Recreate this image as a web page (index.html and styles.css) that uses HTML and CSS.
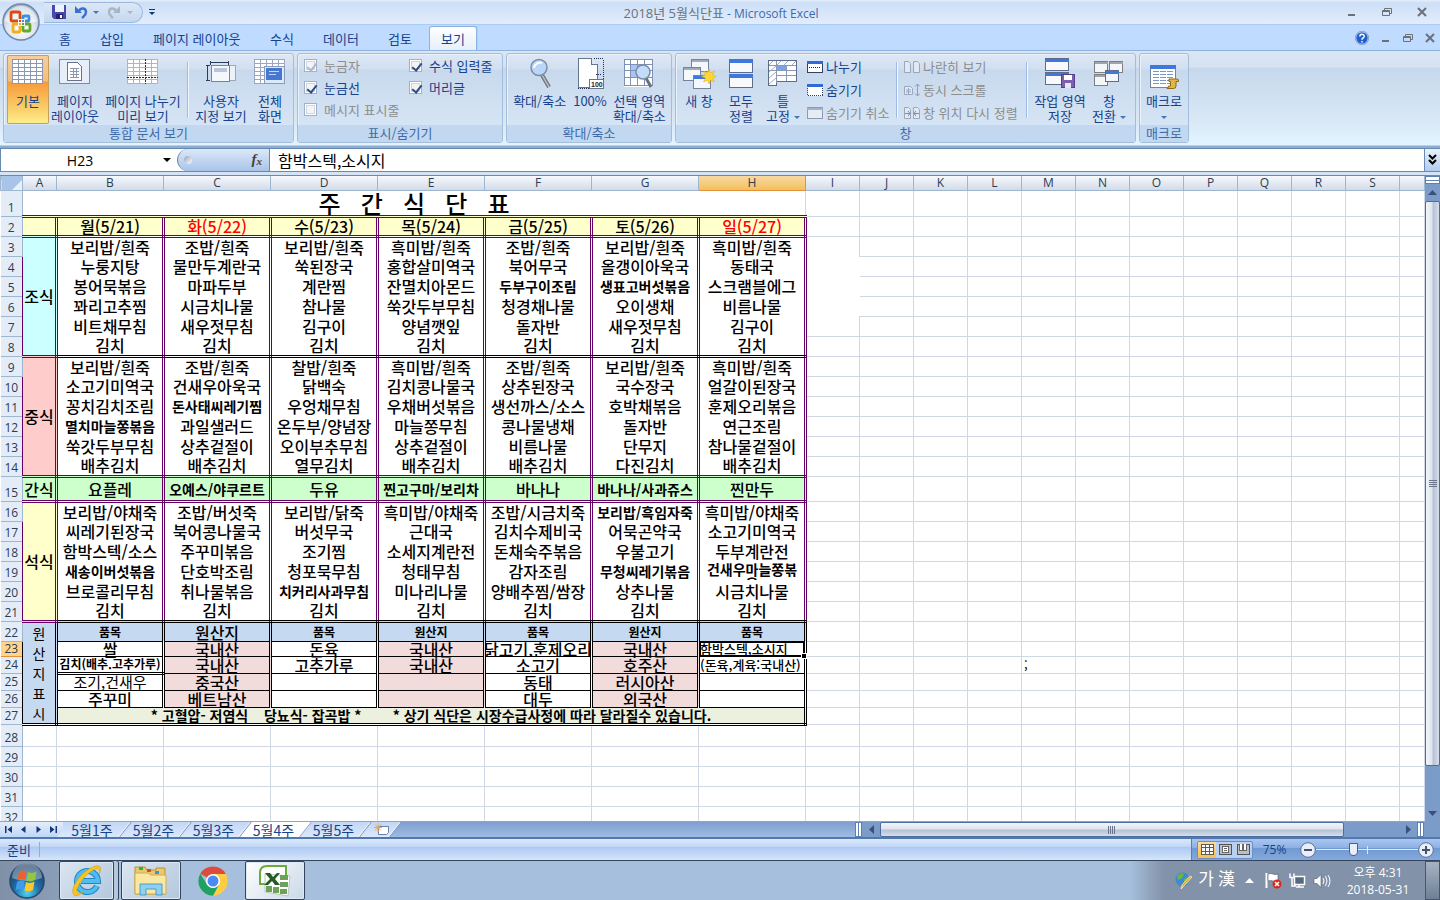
FILE: index.html
```html
<!DOCTYPE html>
<html lang="ko">
<head>
    <meta charset="UTF-8">
    <meta name="viewport" content="width=device-width, initial-scale=1.0">
    <title>2018년 5월식단표 - Microsoft Excel</title>
    <link rel="stylesheet" href="styles.css">
</head>
<body>
    <button class="office-button" aria-label="Office 단추">
        <svg width="38" height="38" viewBox="0 0 38 38">
            <defs>
                <radialGradient id="orb" cx="50%" cy="70%" r="65%">
                    <stop offset="0" stop-color="#fff"/><stop offset=".6" stop-color="#dfe5ee"/><stop offset="1" stop-color="#a9b8ce"/>
                </radialGradient>
            </defs>
            <circle cx="19" cy="19" r="18" fill="url(#orb)" stroke="#6f86a6" stroke-width="1.5"/>
            <path d="M3 19a16 16 0 0 1 32 0z" fill="#fff" opacity=".55"/>
            <g fill="none" stroke-width="2.8">
                <rect x="9" y="9" width="9" height="9" rx="1.500" stroke="#dc4a12"/>
                <rect x="21" y="13" width="6" height="5" rx="1" stroke="#3d8fe0"/>
                <rect x="11" y="21" width="7" height="8" rx="1" stroke="#f2ae1c"/>
                <rect x="21" y="21" width="7" height="7" rx="1" stroke="#66a62c"/>
            </g>
            <path d="M16 16h7v7h-7z" fill="#f4f6fa"/>
            <path d="M17 17h2v2h-2z" fill="#dc4a12"/><path d="M20 17h2v2h-2z" fill="#3d8fe0"/>
            <path d="M17 20h2v2h-2z" fill="#f2ae1c"/><path d="M20 20h2v2h-2z" fill="#66a62c"/>
        </svg>
    </button>

    <header class="title-bar">
        <div class="quick-access">
            <button aria-label="저장">
                <svg width="14" height="14" viewBox="0 0 14 14"><path d="M0 0h14v14H2l-2-2z" fill="#4a48b0"/><path d="M3 0h9v7H3z" fill="#eef3fb"/><path d="M4 9h7v5H4z" fill="#23236b"/><path d="M8 10h2v3H8z" fill="#fff"/></svg>
            </button>
            <button class="undo" aria-label="실행 취소">
                <svg width="13" height="14" viewBox="0 0 13 14"><path d="M4 6c2-4 7-3 7 1 0 3-2 4-4 6" fill="none" stroke="#3c70ca" stroke-width="2.500"/><path d="M0 1v7h7z" fill="#3c70ca"/></svg>
            </button>
            <span class="arrow"></span>
            <button class="redo" aria-label="다시 실행" disabled>
                <svg width="13" height="14" viewBox="0 0 13 14"><path d="M9 6C7 2 2 3 2 7c0 3 2 4 4 6" fill="none" stroke="#a9b6c9" stroke-width="2.500"/><path d="M13 1v7H6z" fill="#a9b6c9"/></svg>
            </button>
            <span class="arrow arrow-off"></span>
        </div>
        <button class="customize" aria-label="빠른 실행 도구 모음 사용자 지정"><span class="bar"></span><span class="arrow"></span></button>
        <h1><span>2018년 5월식단표</span> - Microsoft Excel</h1>
        <div class="window-buttons">
            <button aria-label="최소화"><svg width="10" height="10"><path d="M1 7h7v2H1z" fill="#6b7079"/></svg></button>
            <button aria-label="이전 크기로"><svg width="10" height="10"><path d="M2.500 3V1.500h7v5H8M.5 3.500h7v5h-7zM.5 4.500h7" fill="none" stroke="#6b7079"/></svg></button>
            <button aria-label="닫기"><svg width="10" height="10"><path d="M1 1l8 8M9 1L1 9" stroke="#6b7079" stroke-width="2"/></svg></button>
        </div>
    </header>

    <nav class="menu">
        <button class="menu-home">홈</button>
        <button class="menu-insert">삽입</button>
        <button class="menu-layout">페이지 레이아웃</button>
        <button class="menu-formula">수식</button>
        <button class="menu-data">데이터</button>
        <button class="menu-review">검토</button>
        <button class="menu-view active">보기</button>
        <div class="doc-buttons">
            <button aria-label="도움말"><svg width="14" height="14" viewBox="0 0 14 14"><circle cx="7" cy="7" r="6.300" fill="#1f5fd0" stroke="#fff"/><circle cx="7" cy="7" r="6.700" fill="none" stroke="#4f6d9c" stroke-width=".6"/><path d="M4.800 5.500c0-3 4.600-3 4.400 0C9 7 7 7 7 8.700M7 10v1.500" fill="none" stroke="#fff" stroke-width="1.500"/></svg></button>
            <button aria-label="창 최소화"><svg width="10" height="10"><path d="M1 7h7v2H1z" fill="#6b7079"/></svg></button>
            <button aria-label="창 이전 크기로"><svg width="10" height="10"><path d="M2.500 3V1.500h7v5H8M.5 3.500h7v5h-7zM.5 4.500h7" fill="none" stroke="#6b7079"/></svg></button>
            <button aria-label="창 닫기"><svg width="10" height="10"><path d="M1 1l8 8M9 1L1 9" stroke="#6b7079" stroke-width="2"/></svg></button>
        </div>
    </nav>

    <section class="ribbon">
        <div class="group group-views">
            <div class="tools">
                <button class="big w42 pressed">
                    <svg width="32" height="26"><g shape-rendering="crispEdges"><path d="M0 0h31v25H0z" fill="#fff"/><path d="M.5.5h30v24H.5zM0 4.500h31M0 8.500h31M0 12.500h31M0 16.500h31M0 20.500h31M6.500 0v25M12.500 0v25M18.500 0v25M24.500 0v25" fill="none" stroke="#8a98b4"/></g></svg>
                    기본</button>
                <button class="big w52">
                    <svg width="32" height="26"><g shape-rendering="crispEdges"><path d="M.5.500h30v24H.5z" fill="#e8eef7" stroke="#7c8ba6"/><path d="M8.500 3.500h10l4 4v14h-14z" fill="#fff" stroke="#66758f"/><path d="M11 9.500h9M11 12.500h9M11 15.500h9M11 18.500h9M14.500 9v10M17.500 9v10" stroke="#8a98b4"/></g></svg>
                    페이지<br>레이아웃</button>
                <button class="big w84">
                    <svg width="32" height="26"><g shape-rendering="crispEdges"><path d="M0 0h31v25H0z" fill="#fff"/><path d="M.5.500h30v24H.5zM0 4.500h31M0 8.500h31M0 12.500h31M0 16.500h31M0 20.500h31M6.500 0v25M12.500 0v25M24.500 0v25" fill="none" stroke="#a9b5ca"/><path d="M18.500 0v25M0 18.500h31" stroke="#1f2f55" stroke-dasharray="2 1"/></g></svg>
                    페이지 나누기<br>미리 보기</button>
                <span class="divider"></span>
                <button class="big w60">
                    <svg width="32" height="26"><g shape-rendering="crispEdges"><path d="M20 6.500h10v15H20z" fill="#edf1f8" stroke="#9aa7bd"/><path d="M6.500 6.500h18v16h-18z" fill="#f4f7fc" stroke="#75839c"/><path d="M9 9h13v4H9z" fill="#b8c6dd"/><path d="M2.500 7v15M1 6.500h4M1 21.500h4M6 3.500h17M5.500 2v4M23.500 2v4" stroke="#2d3c5a" fill="none"/></g></svg>
                    사용자<br>지정 보기</button>
                <button class="big w38">
                    <svg width="32" height="26"><g shape-rendering="crispEdges"><path d="M0 0h31v25H0z" fill="#fff"/><path d="M.5.500h30v24H.5zM0 4.500h31M0 8.500h31M0 12.500h31M0 16.500h31M0 20.500h31M6.500 0v25M12.500 0v25M18.500 0v25M24.500 0v25" fill="none" stroke="#9aa7c0"/><path d="M10.500 7.500h20v17h-20z" fill="#dce9fb" stroke="#8b9bb8"/><path d="M12 9h16v12H12z" fill="#4677d2"/><path d="M15 12.500h10M15 15.500h7" stroke="#c5d8f7"/></g></svg>
                    전체<br>화면</button>
            </div>
            <div class="group-name">통합 문서 보기</div>
        </div>

        <div class="group group-show">
            <div class="tools checks">
                <label class="off"><input type="checkbox" checked disabled>눈금자</label>
                <label><input type="checkbox" checked>수식 입력줄</label>
                <label><input type="checkbox" checked>눈금선</label>
                <label><input type="checkbox" checked>머리글</label>
                <label class="off"><input type="checkbox" disabled>메시지 표시줄</label>
            </div>
            <div class="group-name">표시/숨기기</div>
        </div>

        <div class="group group-zoom">
            <div class="tools">
                <button class="big w60">
                    <svg width="32" height="32" viewBox="0 0 32 32"><path d="M18 17l7 12" stroke="#6c6f76" stroke-width="4"/><path d="M18 17l7 12" stroke="#b9bcc2" stroke-width="1.500"/><circle cx="15" cy="9.500" r="8" fill="#b9d6f7" stroke="#7c8ca6" stroke-width="1.500"/><path d="M10 10a6 6 0 0 1 8-5" stroke="#fff" stroke-width="2" fill="none"/></svg>
                    확대/축소</button>
                <button class="big w42">
                    <svg width="32" height="32" viewBox="0 0 32 32"><g shape-rendering="crispEdges"><path d="M4.500.500h13l6 6v23h-19z" fill="#fff" stroke="#66758f"/><path d="M17.500.500v6h6" fill="#dfe7f3" stroke="#66758f"/><path d="M20 .500h9v20M4 30.500h12M22 16.500h6" fill="none" stroke="#1f2f55" stroke-dasharray="1 1"/><path d="M15.500 21.500h14v9h-14z" fill="#fff" stroke="#66758f"/></g><text x="17" y="29" class="icon-number">100</text></svg>
                    100%</button>
                <button class="big w58">
                    <svg width="32" height="32" viewBox="0 0 32 32"><g shape-rendering="crispEdges"><path d="M1 1h28v28H1z" fill="#fff"/><path d="M8 6h14v14H8z" fill="#a8c5f5"/><path d="M1.500 1.500h28v26h-28zM1 6.500h28M1 12.500h28M1 19.500h28M7.500 1v27M14.500 1v27M21.500 1v27" fill="none" stroke="#7f90b5"/></g><path d="M23 20l5 9" stroke="#6c6f76" stroke-width="3"/><circle cx="20" cy="14" r="7" fill="#c3dcf8" stroke="#7c8ca6" stroke-width="1.500"/></svg>
                    선택 영역<br>확대/축소</button>
            </div>
            <div class="group-name">확대/축소</div>
        </div>

        <div class="group group-window">
            <div class="tools">
                <button class="big w42">
                    <svg width="34" height="32" viewBox="0 0 34 32"><g shape-rendering="crispEdges" fill="#f4f7fc" stroke="#75839c"><path d="M9.500 1.500h17v12h-17z"/><path d="M10 3h16" stroke="#a3aab8" stroke-width="2"/><path d="M1.500 9.500h17v13h-17z"/><path d="M2 11h16" stroke="#a3aab8" stroke-width="2"/><path d="M11.500 17.500h17v13h-17z"/><path d="M12 19h16" stroke="#3f78dd" stroke-width="3"/></g><path d="M27 11l1.500 4 4-2-2 4 4 1.500-4 1.500 2 4-4-2-1.500 4-1.500-4-4 2 2-4-4-1.500 4-1.500-2-4 4 2z" fill="#ffd830" stroke="#e2a900" stroke-width=".5"/></svg>
                    새 창</button>
                <button class="big w42">
                    <svg width="26" height="32"><g shape-rendering="crispEdges" fill="#f7f9fd" stroke="#5d6c88"><path d="M1.500 1.500h23v13h-23z"/><path d="M1.500 16.500h23v13h-23z"/><path d="M1 3h24M1 18h24" stroke="#3f78dd" stroke-width="4"/></g></svg>
                    모두<br>정렬</button>
                <button class="big w42">
                    <svg width="32" height="32"><g shape-rendering="crispEdges"><path d="M1.500 2.500h28v21h-20v4h-8z" fill="#fff" stroke="#5d6c88"/><path d="M2 7.500h27M2 12.500h27M9 17.500h20M9.500 3v22M19.500 7v16" stroke="#8a98b4"/><path d="M10 8h9v4h-9z" fill="#78a5ec"/></g><path d="M2 7l4-4M10 7l4-4M17 7l4-4M25 7l4-4M2 14l7-6M2 20l7-6M2 26l7-6" stroke="#9aadd0"/></svg>
                    틀<br>고정<span class="arrow"></span></button>
                <div class="small-tools split-tools">
                    <button><svg width="16" height="14"><g shape-rendering="crispEdges"><path d="M.5 1.500h15v11H.5z" fill="#fff" stroke="#33425f"/><path d="M0 2.500h16" stroke="#2f6ad8" stroke-width="3"/><path d="M2 7.500h12" stroke="#1c2c4c" stroke-dasharray="1 1"/></g></svg>나누기</button>
                    <button><svg width="16" height="14"><g shape-rendering="crispEdges"><path d="M.5 1.500h15v11H.5z" fill="#fff" stroke="#33425f" stroke-dasharray="1 1"/><path d="M0 2.500h16" stroke="#2f6ad8" stroke-width="3"/></g></svg>숨기기</button>
                    <button disabled><svg width="16" height="14"><g shape-rendering="crispEdges"><path d="M.5 1.500h15v11H.5z" fill="#e6ecf5" stroke="#8d9ab0"/><path d="M0 2.500h16" stroke="#a5b2c8" stroke-width="2"/></g></svg>숨기기 취소</button>
                </div>
                <span class="divider"></span>
                <div class="small-tools side-tools">
                    <button disabled><svg width="16" height="14"><path d="M.5 1.500h4l2 2v9h-6zM9.500 1.500h4l2 2v9h-6z" fill="#e3e9f3" stroke="#9aa8bf"/></svg>나란히 보기</button>
                    <button disabled><svg width="16" height="14"><path d="M.5 3.500h6l2 2v6h-8zM2 7h5M2 9h5M4.500 5v6" fill="#e3e9f3" stroke="#9aa8bf"/><path d="M13.500 1v12M11 3.500L13.500 1 16 3.500M11 10.500l2.500 2.500 2.500-2.500" fill="none" stroke="#8f9cb2"/></svg>동시 스크롤</button>
                    <button disabled><svg width="16" height="14"><path d="M.5 1.500h4l2 2v9h-6zM9.500 1.500h4l2 2v9h-6z" fill="#e3e9f3" stroke="#9aa8bf"/><path d="M1 7.500h5M4 5l2 2.500L4 10M15 7.500h-5M12 5l-2 2.500 2 2.500" fill="none" stroke="#7c8aa2"/></svg>창 위치 다시 정렬</button>
                </div>
                <span class="divider"></span>
                <button class="big w58">
                    <svg width="32" height="32"><g shape-rendering="crispEdges" fill="#f7f9fd" stroke="#5d6c88"><path d="M1.500.500h23v12h-23z"/><path d="M1.500 14.500h23v12h-23z"/><path d="M1 2h24M1 16h24" stroke="#3f78dd" stroke-width="3"/><path d="M17.500 16.500h13v13h-13z" fill="#7d5fb0" stroke="#54408a"/><path d="M20 17h8v5h-8z" fill="#fff" stroke="none"/><path d="M21 25h6v5h-6z" fill="#e8e4f2" stroke="none"/></g></svg>
                    작업 영역<br>저장</button>
                <button class="big w40">
                    <svg width="32" height="32"><g shape-rendering="crispEdges" fill="#f4f6fa" stroke="#7d7f85"><path d="M1.500 3.500h13v11h-13z"/><path d="M16.500 3.500h13v11h-13z"/><path d="M1.500 16.500h13v11h-13z"/><path d="M2 5h13M17 5h13M2 18h13" stroke="#a2a4aa" stroke-width="2"/><path d="M12.500 12.500h13v11h-13z" stroke="#5d6c88"/><path d="M13 14h13" stroke="#3f78dd" stroke-width="3"/></g></svg>
                    창<br>전환<span class="arrow"></span></button>
            </div>
            <div class="group-name">창</div>
        </div>

        <div class="group group-macro">
            <div class="tools">
                <button class="big w42">
                    <svg width="32" height="32"><g shape-rendering="crispEdges"><path d="M2.500 7.500h25v22h-25z" fill="#fff" stroke="#75839c"/><path d="M2 9h26" stroke="#3f78dd" stroke-width="4"/><path d="M5 13.500h20M5 16.500h20M5 19.500h20M5 22.500h20M5 25.500h20" stroke="#7b96cc" stroke-dasharray="6 1"/></g><path d="M21 21h8q2 0 1.500 2.500H28V28q0 2.500-2.500 2.500H19q1.500-1 1.500-2.500h2v-4.500H21z" fill="#e3b545" stroke="#8f6a14"/></svg>
                    매크로<br><span class="arrow"></span></button>
            </div>
            <div class="group-name">매크로</div>
        </div>
    </section>

    <section class="formula-bar">
        <div class="name-box">
            <input value="H23" aria-label="이름 상자">
            <span class="arrow arrow-black"></span>
        </div>
        <div class="fx"><span class="knob"></span><button aria-label="함수 삽입"><i>f</i><sub>x</sub></button></div>
        <input class="formula" value="함박스텍,소시지" aria-label="수식 입력줄">
        <button class="expand" aria-label="수식 입력줄 확장"><svg width="9" height="12"><path d="M1 1l3.500 3.500L8 1M1 6l3.500 3.500L8 6" fill="none" stroke="#000" stroke-width="2"/></svg></button>
    </section>

    <main class="workspace">
        <div class="grid">
            <table class="sheet" id="sheet"></table>
        </div>
        <div class="v-scroll">
            <span class="split"></span>
            <button aria-label="위로"><svg width="9" height="5"><path d="M0 5l4.500-5L9 5z" fill="#3c4f78"/></svg></button>
            <span class="thumb"><svg width="8" height="8"><path d="M0 .5h8M0 2.500h8M0 4.500h8M0 6.500h8" stroke="#6a7488"/></svg></span>
            <button aria-label="아래로"><svg width="9" height="5"><path d="M0 0l4.500 5L9 0z" fill="#3c4f78"/></svg></button>
        </div>
    </main>

    <div class="sheet-bar">
        <div class="sheet-nav">
            <button aria-label="첫 시트"><svg width="7" height="7"><path d="M0 0h1.500v7H0zM7 0v7L2.500 3.500z" fill="#15357a"/></svg></button>
            <button aria-label="이전 시트"><svg width="7" height="7"><path d="M5.500 0v7L1 3.500z" fill="#15357a"/></svg></button>
            <button aria-label="다음 시트"><svg width="7" height="7"><path d="M1.500 0v7L6 3.500z" fill="#15357a"/></svg></button>
            <button aria-label="마지막 시트"><svg width="7" height="7"><path d="M5.500 0H7v7H5.500zM0 0v7l4.500-3.500z" fill="#15357a"/></svg></button>
        </div>
        <div class="sheet-tabs">
            <button>5월1주</button>
            <button>5월2주</button>
            <button>5월3주</button>
            <button class="current">5월4주</button>
            <button>5월5주</button>
            <button class="new-sheet" aria-label="워크시트 삽입"><svg width="15" height="13"><path d="M4.500 3.500h10v6l-2 2h-8z" fill="#fff" stroke="#6780ac"/><path d="M4 0v9M0 4.500h8M1 1.500l6 6M7 1.500l-6 6" stroke="#f0a63a"/></svg></button>
        </div>
        <div class="h-scroll">
            <span class="grip"></span>
            <button aria-label="왼쪽으로"><svg width="5" height="9"><path d="M5 0v9L0 4.500z" fill="#3c4f78"/></svg></button>
            <span class="thumb"><svg width="8" height="8"><path d="M.5 0v8M2.500 0v8M4.500 0v8M6.500 0v8" stroke="#6a7488"/></svg></span>
            <button class="right" aria-label="오른쪽으로"><svg width="5" height="9"><path d="M0 0v9l5-4.500z" fill="#3c4f78"/></svg></button>
            <span class="grip"></span>
        </div>
    </div>

    <footer class="status-bar">
        <span class="ready">준비</span>
        <div class="view-tools">
            <div class="view-buttons">
                <button class="on" aria-label="기본"><svg width="13" height="11" shape-rendering="crispEdges"><path d="M.5.500h12v10H.5zM0 3.500h13M0 7.500h13M4.500 0v11M8.500 0v11" fill="#fff" stroke="#5f5a4a"/></svg></button>
                <button aria-label="페이지 레이아웃"><svg width="13" height="11" shape-rendering="crispEdges"><path d="M.5.500h12v10H.5z" fill="#b9bec8" stroke="#555"/><path d="M3.500 2.500h6v6h-6zM5 4.500h3M5 6.500h3" fill="#fff" stroke="#666"/></svg></button>
                <button aria-label="페이지 나누기 미리 보기"><svg width="13" height="11" shape-rendering="crispEdges"><path d="M.5.500h12v10H.5z" fill="#b9bec8" stroke="#555"/><path d="M2.500 0v6.500h3V0M6.500 0v6.500h3V0" fill="#fff" stroke="#666"/></svg></button>
            </div>
            <button class="percent">75%</button>
            <button class="round" aria-label="축소"><svg width="16" height="16"><circle cx="8" cy="8" r="7.300" fill="#e9eff8" stroke="#5c7196"/><path d="M4 8h8" stroke="#44536e" stroke-width="2"/></svg></button>
            <input type="range" min="0" max="100" value="36" aria-label="확대/축소">
            <button class="round" aria-label="확대"><svg width="16" height="16"><circle cx="8" cy="8" r="7.300" fill="#e9eff8" stroke="#5c7196"/><path d="M4 8h8M8 4v8" stroke="#44536e" stroke-width="2"/></svg></button>
        </div>
    </footer>

    <div class="taskbar">
        <button class="start" aria-label="시작">
            <svg width="36" height="36" viewBox="0 0 36 36">
                <defs><radialGradient id="start" cx="50%" cy="85%" r="75%"><stop offset="0" stop-color="#4fd3f5"/><stop offset=".5" stop-color="#1f6ea8"/><stop offset="1" stop-color="#1b3f66"/></radialGradient></defs>
                <circle cx="18" cy="18" r="17" fill="url(#start)" stroke="#29486b" stroke-width="1.500"/>
                <path d="M3 15a15 15 0 0 1 30 0q-15 6-30 0z" fill="#fff" opacity=".35"/>
                <path d="M10 9q4-2.500 7.500-.5L16 17q-3.500-2-7.500.5z" fill="#f0602a"/>
                <path d="M19 9q4 2 8.500-.5L26 17q-4 2.500-8.500.5z" fill="#93c83e"/>
                <path d="M8 19q4-2.500 7.500-.5L14 27q-3.500-2-7.500.5z" fill="#3f9bec"/>
                <path d="M17 19q4 2 8.500-.5L24 27q-4 2.500-8.500.5z" fill="#fcc72c"/>
            </svg>
        </button>
        <button class="task stacked" aria-label="Internet Explorer">
            <svg width="32" height="32" viewBox="0 0 32 32">
                <path d="M26 21a10.500 10.500 0 1 1 1-5H10" fill="none" stroke="#1d86cc" stroke-width="6"/>
                <path d="M26 21a10.500 10.500 0 1 1 1-5H10" fill="none" stroke="#50bdf0" stroke-width="4"/>
                <path d="M3 30C-3 24 13 3 25 1c5-1 6 3 3 8 1-4 0-6-3-5C17 6 4 22 6 27c1 2 4 1 7-1-4 4-8 6-10 4z" fill="#f7c51e" stroke="#cf9408" stroke-width=".5"/>
            </svg>
        </button>
        <button class="task" aria-label="탐색기">
            <svg width="34" height="32" viewBox="0 0 34 32">
                <path d="M1 2h10l2 3h9V3h9v26H1z" fill="#e9ca6a" stroke="#b99433"/>
                <path d="M5 2h4v3H5z" fill="#2db34a"/><path d="M13 4h4v3h-4z" fill="#d54a32"/><path d="M21 6h4v3h-4z" fill="#3b93dc"/>
                <path d="M1 8h13l3 2h15v19H1z" fill="#f9e7a4" stroke="#cfae55"/>
                <path d="M6 30V19h22v11h-6v-6H12v6z" fill="#8fd0ee" stroke="#4b9dc8"/>
            </svg>
        </button>
        <button class="task plain" aria-label="Chrome">
            <svg width="30" height="30" viewBox="0 0 30 30">
                <path d="M15 15L2.300 7.700A14.700 14.700 0 0 1 27.700 7.700z" fill="#dd4b3e"/>
                <path d="M15 8H27.900a14.700 14.700 0 0 1-13 21.700l6-11z" fill="#fecd41"/>
                <path d="M2.300 7.700L9 18.500q6 7 12 0l-6 11.200A14.700 14.700 0 0 1 2.300 7.700z" fill="#1fa261"/>
                <circle cx="15" cy="15" r="7" fill="#fff"/><circle cx="15" cy="15" r="5.500" fill="#4a8af4"/>
            </svg>
        </button>
        <button class="task front" aria-label="Excel">
            <svg width="32" height="32" viewBox="0 0 32 32">
                <path d="M8 1h19v18H1V8q0-7 7-7z" fill="#fff" stroke="#69ad3c" stroke-width="2"/>
                <path d="M6 9l25 2-2 20-23-4z" fill="#fff" stroke="#b9c9b4"/>
                <path d="M21 10h8v5h-8zM21 17h8v5h-8zM21 24h7v5h-7zM14 22h6v6h-6zM7 21h6v6H7z" fill="#6da25a"/>
                <path d="M6 8h5l3 4 4-4h3l-5 6 5 6h-5l-3-4-4 4H5l6-6z" fill="#235a26"/>
            </svg>
        </button>
        <div class="tray">
            <svg width="18" height="18" viewBox="0 0 18 18"><circle cx="7.500" cy="7.500" r="7" fill="#3d8bcf"/><path d="M2 4q4-4 7-2l-2 4-4 2zM9 7l5-2q1 4-2 7l-3-1z" fill="#6cb648"/><path d="M17 5l-8 9-3 3 1-4 8-9z" fill="#f4a52a" stroke="#fff" stroke-width=".6"/></svg>
            <span class="ime">가</span>
            <span class="ime">漢</span>
            <svg class="up" width="9" height="5"><path d="M0 5l4.500-5L9 5z" fill="#fff"/></svg>
            <svg width="17" height="17"><path d="M1.500 1v15" stroke="#fff" stroke-width="2"/><path d="M3 2q3-1 5 0t5 0v7q-3 1-5 0t-5 0z" fill="#fff" stroke="#4b5a70" stroke-width=".6"/><circle cx="12" cy="12" r="4.500" fill="#d8281c"/><path d="M10 10l4 4M14 10l-4 4" stroke="#fff" stroke-width="1.500"/></svg>
            <svg width="17" height="17"><path d="M5.500 4.500h10v8h-10z" fill="#56687f" stroke="#fff" stroke-width="1.500"/><path d="M7 15h8M10 12v3M1 1.500v4h4v-4M3 5v9h4" fill="none" stroke="#fff" stroke-width="1.500"/></svg>
            <svg width="18" height="16"><path d="M1 5.500h3l4-4v13l-4-4H1z" fill="#fff" stroke="#4b5a70" stroke-width=".6"/><path d="M10 5q2 3 0 6M12.500 3q3 5 0 10M15 2q4 6 0 12" fill="none" stroke="#fff"/></svg>
        </div>
        <div class="clock"><span>오후 4:31</span><span>2018-05-31</span></div>
        <button class="show-desktop" aria-label="바탕 화면 보기"></button>
    </div>

    <script>
        const columns = 'ABCDEFGHIJKLMNOPQRS'.split('').concat('');
        const widths = [22, 34, 107, 107, 107, 107, 107, 107, 107, 54, 54, 54, 54, 54, 54, 54, 54, 54, 54, 54];
        const heights = { 1: 26, 15: 25, 23: 15, 24: 17, 25: 17, 26: 17, 27: 17, 28: 22 };

        // a leading ~ marks text that is shrunk to fit its cell
        const menu = {
            2: ['월(5/21)', '화(5/22)', '수(5/23)', '목(5/24)', '금(5/25)', '토(5/26)', '일(5/27)'],
            3: ['보리밥/흰죽', '조밥/흰죽', '보리밥/흰죽', '흑미밥/흰죽', '조밥/흰죽', '보리밥/흰죽', '흑미밥/흰죽'],
            4: ['누룽지탕', '물만두계란국', '쑥된장국', '홍합살미역국', '북어무국', '올갱이아욱국', '동태국'],
            5: ['봉어묵볶음', '마파두부', '계란찜', '잔멸치아몬드', '~두부구이조림', '~생표고버섯볶음', '스크램블에그'],
            6: ['꽈리고추찜', '시금치나물', '참나물', '쑥갓두부무침', '청경채나물', '오이생채', '비름나물'],
            7: ['비트채무침', '새우젓무침', '김구이', '양념깻잎', '돌자반', '새우젓무침', '김구이'],
            8: ['김치', '김치', '김치', '김치', '김치', '김치', '김치'],
            9: ['보리밥/흰죽', '조밥/흰죽', '찰밥/흰죽', '흑미밥/흰죽', '조밥/흰죽', '보리밥/흰죽', '흑미밥/흰죽'],
            10: ['소고기미역국', '건새우아욱국', '닭백숙', '김치콩나물국', '상추된장국', '국수장국', '얼갈이된장국'],
            11: ['꽁치김치조림', '~돈사태씨레기찜', '우엉채무침', '우채버섯볶음', '생선까스/소스', '호박채볶음', '훈제오리볶음'],
            12: ['~멸치마늘쫑볶음', '과일샐러드', '온두부/양념장', '마늘쫑무침', '콩나물냉채', '돌자반', '연근조림'],
            13: ['쑥갓두부무침', '상추겉절이', '오이부추무침', '상추겉절이', '비름나물', '단무지', '참나물겉절이'],
            14: ['배추김치', '배추김치', '열무김치', '배추김치', '배추김치', '다진김치', '배추김치'],
            15: ['요플레', '~오예스/야쿠르트', '두유', '~찐고구마/보리차', '바나나', '~바나나/사과쥬스', '찐만두'],
            16: ['보리밥/야채죽', '조밥/버섯죽', '보리밥/닭죽', '흑미밥/야채죽', '조밥/시금치죽', '~보리밥/흑임자죽', '흑미밥/야채죽'],
            17: ['씨레기된장국', '북어콩나물국', '버섯무국', '근대국', '김치수제비국', '어묵곤약국', '소고기미역국'],
            18: ['함박스텍/소스', '주꾸미볶음', '조기찜', '소세지계란전', '돈채숙주볶음', '우불고기', '두부계란전'],
            19: ['~새송이버섯볶음', '단호박조림', '청포묵무침', '청태무침', '감자조림', '~무청씨레기볶음', '~건새우마늘쫑볶음'],
            20: ['브로콜리무침', '취나물볶음', '~치커리사과무침', '미나리나물', '양배추찜/쌈장', '상추나물', '시금치나물'],
            21: ['김치', '김치', '김치', '김치', '김치', '김치', '김치'],
            22: ['품목', '원산지', '품목', '원산지', '품목', '원산지', '품목'],
            23: ['쌀', '국내산', '돈육', '국내산', '닭고기,훈제오리', '국내산', '함박스텍,소시지'],
            24: ['김치(배추.고추가루)', '국내산', '고추가루', '국내산', '소고기', '호주산', '(돈육,계육:국내산)'],
            25: ['조기,건새우', '중국산', '', '', '동태', '러시아산', ''],
            26: ['주꾸미', '베트남산', '', '', '대두', '외국산', '']
        };
        const sides = {
            2: ['', 1, 'head'], 3: ['조식', 6, 'breakfast'], 9: ['중식', 6, 'lunch'],
            15: ['간식', 1, 'snack'], 16: ['석식', 6, 'dinner'], 22: ['원<br>산<br>지<br>표<br>시', 6, 'origin-side']
        };
        const ends = [2, 8, 14, 15, 21];

        let html = '<colgroup>' + widths.map(w => `<col style="width:${w}px">`).join('') + '<col></colgroup>';
        html += '<tr class="letters"><th class="corner"></th>' + columns.map(c => `<th class="${c === 'H' ? 'picked' : ''}">${c}</th>`).join('') + '</tr>';

        for (let r = 1; r <= 32; r++) {
            html += `<tr class="row-${r}" style="height:${heights[r] || 20}px"><th class="number ${r === 23 ? 'picked' : ''}">${r}</th>`;
            if (sides[r]) {
                html += `<td rowspan="${sides[r][1]}" class="side ${sides[r][2]}">${sides[r][0]}</td>`;
            }
            if (r === 1) {
                html += '<td colspan="8" class="title">주   간   식   단   표</td>';
            } else if (menu[r]) {
                html += menu[r].map((text, i) => {
                    let name = r < 22 ? 'dish' : 'origin';
                    if (ends.includes(r)) name += ' end';
                    if (r === 2) name += i === 1 || i === 6 ? ' head red' : ' head';
                    if (r === 15) name += ' snack';
                    if (r === 22) name += ' origin-head';
                    if (r > 22 && i % 2) name += ' pink';
                    if (text[0] === '~') name += ' fit';
                    return `<td class="${name} ${columns[i + 1]}${r}"><span>${text.replace('~', '')}</span></td>`;
                }).join('');
            } else if (r === 27) {
                html += '<td colspan="7" class="notice">* 고혈압- 저염식    당뇨식- 잡곡밥 *        * 상기 식단은 시장수급사정에 따라 달라질수 있습니다.</td>';
            }
            const first = r > 27 ? 0 : 8;
            for (let i = first; i < columns.length; i++) {
                html += `<td class="cell ${columns[i]}${r}">${columns[i] + r === 'M24' ? ';' : ''}</td>`;
            }
            html += '</tr>';
        }
        document.getElementById('sheet').innerHTML = html;
    </script>
</body>
</html>
```
FILE: styles.css
```css
* {
    box-sizing: border-box;
}
body {
    margin: 0;
    height: 100vh;
    display: flex;
    flex-direction: column;
    overflow: hidden;
    background-color: #bfdbff;
    font-family: "Noto Sans CJK KR", sans-serif;
    font-size: 13px;
    line-height: 15px;
    color: #15428b;
}
button {
    background: none;
    border: none;
    padding: 0;
    margin: 0;
    font: inherit;
    color: inherit;
    white-space: nowrap;
}
input {
    font: inherit;
    border: none;
    padding: 0;
    margin: 0;
    outline: none;
}
svg {
    display: block;
    flex: none;
}
.arrow {
    display: inline-block;
    width: 0;
    height: 0;
    border: 3px solid transparent;
    border-top-color: #4a74b4;
    border-bottom: none;
}
.arrow-off {
    border-top-color: #a9b6c9;
}
.arrow-black {
    border-width: 4px;
    border-top-color: #000;
    border-bottom: none;
}

/* title bar */
.office-button {
    position: absolute;
    left: 2px;
    top: 3px;
    z-index: 2;
}
.title-bar {
    height: 25px;
    flex: none;
    display: flex;
    align-items: center;
    padding-left: 44px;
    background: linear-gradient(#e6effb, #cddff7 12%, #e2edfb);
    border-bottom: 1px solid #a9cbf5;
}
.quick-access {
    width: 99px;
    height: 21px;
    display: flex;
    align-items: center;
    padding-left: 8px;
    border: 1px solid #9db8dc;
    border-left: none;
    border-radius: 0 11px 11px 0;
    background: linear-gradient(#dbe7f6, #c6d8ee);
}
.undo {
    margin: 0 5px 0 9px;
}
.redo {
    margin: 0 7px 0 8px;
}
.customize {
    display: flex;
    flex-direction: column;
    align-items: center;
    gap: 2px;
    margin-left: 6px;
}
.customize .bar {
    width: 6px;
    height: 1px;
    background-color: #15357a;
}
.customize .arrow {
    border-top-color: #15357a;
}
h1 {
    flex: 1;
    margin: 0;
    padding-right: 60px;
    padding-top: 2px;
    text-align: center;
    font-size: 12px;
    font-weight: normal;
    font-family: "Open Sans", "Noto Sans CJK KR", sans-serif;
    color: #3e6aaa;
}
h1 span {
    font-size: 13px;
    color: #69737f;
}
.window-buttons {
    display: flex;
    gap: 25px;
    padding-right: 13px;
}

/* ribbon tabs */
.menu {
    height: 26px;
    flex: none;
    display: flex;
    align-items: flex-end;
    padding-left: 59px;
    border-bottom: 1px solid #8db2e3;
}
.menu > button {
    height: 24px;
    text-align: left;
}
.menu-home {
    width: 41px;
}
.menu-insert {
    width: 53px;
}
.menu-layout {
    width: 117px;
}
.menu-formula {
    width: 53px;
}
.menu-data {
    width: 65px;
}
.menu-review {
    width: 41px;
}
.menu > .menu-view {
    width: 48px;
    text-align: center;
    border: 1px solid #8db2e3;
    border-bottom: none;
    border-radius: 3px 3px 0 0;
    background: linear-gradient(#fff, #e6effa);
    box-shadow: 1px 0 1px #8fe4f0;
}
.doc-buttons {
    display: flex;
    gap: 12px;
    align-items: center;
    height: 25px;
    margin-left: auto;
    padding-right: 5px;
}

/* ribbon */
.ribbon {
    height: 97px;
    flex: none;
    display: flex;
    align-items: flex-start;
    gap: 3px;
    padding: 2px 3px 5px;
    background: linear-gradient(#dbe6f4, #d6e2f2 16px, #c7d8ed 17px, #d8e8f5 70px, #e2f5ff 94px, #8fabcf 95px);
}
.group {
    height: 90px;
    flex: none;
    display: flex;
    flex-direction: column;
    border: 1px solid #a3bedb;
    border-radius: 3px;
    box-shadow: inset 1px 1px 0 #e9f1fa;
    background: linear-gradient(#dee8f5, #d1dff0 15px, #c8d9ed 16px, #dae8f7);
}
.group-name {
    height: 17px;
    flex: none;
    line-height: 16px;
    text-align: center;
    color: #3e6aaa;
    background-color: #c1d8f0;
}
.tools {
    flex: 1;
    min-height: 0;
    display: flex;
    padding: 1px 3px;
}
.group-views {
    width: 291px;
}
.group-show {
    width: 206px;
}
.group-zoom {
    width: 166px;
}
.group-window {
    width: 461px;
}
.group-macro {
    width: 50px;
}
.big {
    display: block;
    text-align: center;
    line-height: 15px;
    align-self: flex-start;
}
.big svg {
    height: 32px;
    margin: 4px auto 2px;
}
.group-zoom .big svg,
.group-window .big svg,
.group-macro .big svg {
    margin: 3px auto;
}
.big .arrow {
    margin-left: 4px;
    vertical-align: middle;
}
.group-macro .big .arrow {
    margin: 0;
}
.w38 {
    width: 38px;
}
.w40 {
    width: 40px;
}
.w42 {
    width: 42px;
}
.w52 {
    width: 52px;
}
.w58 {
    width: 58px;
}
.w60 {
    width: 60px;
}
.w84 {
    width: 84px;
}
.pressed {
    padding-bottom: 16px;
    border-radius: 2px;
    box-shadow: inset 0 0 0 1px #c2a060;
    background: linear-gradient(#f5cfa0, #f8bd77 26px, #f79a3a 27px, #fbd46e 56px, #fdf090);
}
.divider {
    width: 2px;
    height: 56px;
    margin: 7px 2px;
    background-color: #9cbce6;
    border-right: 1px solid #f2f7fd;
}
.checks {
    display: grid;
    grid-template-columns: 105px 1fr;
    grid-auto-rows: 22px;
    padding: 0 6px;
}
.checks label {
    display: flex;
    align-items: center;
    gap: 7px;
}
.checks input {
    appearance: none;
    width: 13px;
    height: 13px;
    border: 1px solid #9fb2cc;
    background-color: #f4f4f4;
    box-shadow: inset 0 0 0 1px #fff, inset 0 0 0 2px #cfd6e0;
    position: relative;
}
.checks input:checked::after {
    content: "";
    position: absolute;
    left: 4px;
    top: 1px;
    width: 4px;
    height: 8px;
    border: solid #2b4d86;
    border-width: 0 2px 2px 0;
    transform: rotate(38deg);
}
.checks input:disabled::after {
    border-color: #a9b8cc;
}
.off,
.small-tools button:disabled {
    color: #8d8d8d;
}
.icon-number {
    font-family: "Liberation Sans", sans-serif;
    font-size: 7px;
    font-weight: bold;
    fill: #222;
}
.group-window .tools {
    padding: 1px 2px;
}
.group-window .divider {
    margin: 7px 3px;
}
.small-tools {
    display: flex;
    flex-direction: column;
    padding-left: 3px;
}
.small-tools button {
    height: 23px;
    display: flex;
    align-items: center;
    gap: 3px;
}
.split-tools {
    width: 89px;
}
.side-tools {
    width: 122px;
}

/* formula bar */
.formula-bar {
    height: 28px;
    flex: none;
    display: flex;
    border-top: 1px solid #6789b5;
    border-bottom: 1px solid #6789b5;
    box-shadow: inset 0 -3px 0 #d4e3f5, inset 0 -4px 0 #6789b5;
    padding-bottom: 4px;
    background-color: #fff;
    color: #000;
}
.name-box {
    width: 177px;
    display: flex;
    align-items: center;
    border-left: 1px solid #6789b5;
}
.name-box input {
    width: 158px;
    text-align: center;
    font-family: "Open Sans", sans-serif;
    font-size: 14px;
    background: none;
}
.name-box .arrow {
    margin-left: 4px;
}
.fx {
    width: 93px;
    display: flex;
    justify-content: space-between;
    align-items: center;
    padding: 0 7px 0 6px;
    border: 1px solid #6789b5;
    border-width: 0 1px 0 1px;
    border-radius: 12px 0 0 12px;
    background: linear-gradient(#dce8f8, #a9c4ea);
}
.knob {
    width: 8px;
    height: 8px;
    border-radius: 50%;
    background: linear-gradient(135deg, #94a3ba, #fff);
}
.fx button {
    font-family: "Liberation Serif", serif;
    font-weight: bold;
    font-size: 15px;
    color: #444;
}
.fx sub {
    font-size: 11px;
    font-style: italic;
    vertical-align: -1px;
}
.formula {
    flex: 1;
    min-width: 0;
    padding-left: 8px;
    font-size: 16px;
}
.expand {
    width: 16px;
    display: flex;
    align-items: center;
    justify-content: center;
    border-left: 1px solid #6789b5;
    background: linear-gradient(#eaf1fb, #b3cbec);
}

/* worksheet */
.workspace {
    flex: 1;
    min-height: 0;
    display: flex;
}
.grid {
    flex: 1;
    min-width: 0;
    overflow: hidden;
    background-color: #fff;
    border-bottom: 1px solid #8aa6ce;
}
.sheet {
    width: 100%;
    table-layout: fixed;
    border-collapse: collapse;
    line-height: 12px;
    color: #000;
}
.sheet th,
.sheet td {
    padding: 0;
    text-align: center;
    white-space: nowrap;
}
.sheet th {
    font-family: "Open Sans", sans-serif;
    font-size: 12px;
    font-weight: normal;
    color: #2b3c55;
    border: 1px solid #9eb6ce;
}
.letters {
    height: 14px;
}
.letters th {
    border-top: none;
    background: linear-gradient(#f6f9fc, #d3dbe8);
}
.sheet .corner {
    background: linear-gradient(135deg, #a9c4e9 70%, #e8f0fa 70%);
}
.letters .picked {
    background: linear-gradient(#f9d9a1, #f1bf5f);
    border: 1px solid #e69138;
    border-top: none;
}
.sheet .number {
    background-color: #e4ecf7;
    border-left: none;
    vertical-align: bottom;
    line-height: 14px;
    padding-bottom: 1px;
}
.sheet .number.picked {
    padding-bottom: 0;
    background-color: #ffd58d;
    border-color: #e69138;
}
.sheet .cell {
    border: 1px solid #d0d7e5;
}
.sheet .title {
    font-size: 24px;
    font-weight: 500;
    line-height: 22px;
    white-space: pre;
    border-bottom: 3px double #660066;
}
.sheet .side {
    font-size: 16px;
    font-weight: 500;
    border: 3px double #660066;
    border-left: 1px solid #660066;
}
.sheet .dish {
    font-size: 16px;
    font-weight: 500;
    border-left: 3px double #660066;
    border-right: 3px double #660066;
}
.sheet .end {
    border-bottom: 3px double #660066;
}
.sheet .row-8 .end,
.sheet .row-21 .end {
    border-bottom-color: #000;
}
.sheet .fit {
    font-size: 14px;
    font-weight: bold;
}
.head {
    background-color: #ffffcc;
}
.red {
    color: #f00;
}
.breakfast {
    background-color: #ccffff;
}
.lunch {
    background-color: #ffcccc;
}
.snack {
    background-color: #ccffcc;
}
.dinner {
    background-color: #ffffcc;
}
.sheet .origin-side {
    line-height: 20px;
    font-size: 14px;
    font-weight: normal;
    background-color: #c5d9f1;
    border: 3px double #000;
    border-left: 1px solid #000;
}
.sheet .origin {
    font-size: 16px;
    font-weight: 500;
    border: 1px solid #000;
    border-left: 3px double #000;
    border-right: 3px double #000;
}
.sheet .origin-head {
    border-top: 3px double #000;
    font-size: 12px;
    font-weight: bold;
    background-color: #c5d9f1;
}
.sheet .C22 {
    font-size: 16px;
    font-weight: 500;
}
.pink {
    background-color: #f2dcdb;
}
.sheet .B24 {
    font-size: 12px;
    font-weight: bold;
    border-bottom: 3px double #000;
}
.sheet .B25 {
    font-size: 15px;
    font-weight: normal;
}
.sheet .F23 {
    overflow: hidden;
}
.sheet .F23 span {
    display: flex;
    justify-content: center;
}
.sheet .H23,
.sheet .H24 {
    font-size: 13px;
    text-align: left;
}
.sheet .H23 {
    position: relative;
}
.H23::before {
    content: "";
    position: absolute;
    inset: 0;
    border: 1px solid #000;
}
.H23::after {
    content: "";
    position: absolute;
    right: -3px;
    bottom: -3px;
    width: 4px;
    height: 4px;
    background-color: #000;
    border: 1px solid #fff;
}
.H19 span {
    display: block;
    height: 18px;
    padding: 0 4px;
    line-height: 14px;
    white-space: normal;
    overflow: hidden;
}
.sheet .notice {
    font-size: 14px;
    font-weight: bold;
    white-space: pre;
    background-color: #ebf1de;
    border: 3px double #000;
    border-top: 1px solid #000;
}
.sheet .M24 {
    text-align: left;
    padding-left: 2px;
}
.sheet .I4,
.sheet .I5,
.sheet .I6 {
    border: none;
}
.sheet .I3 {
    border-bottom: none;
}
.sheet .I7 {
    border-top: none;
}
.sheet .J4,
.sheet .J5,
.sheet .J6 {
    border-left: none;
}

/* scroll bars */
.v-scroll {
    width: 15px;
    flex: none;
    display: flex;
    flex-direction: column;
    background-color: #7b9bc9;
}
.v-scroll .split {
    height: 8px;
    border: 1px solid #5d80b3;
    background: linear-gradient(#fff 3px, #5d80b3 3px, #5d80b3 4px, #fff 4px);
}
.v-scroll button {
    height: 17px;
    display: flex;
    align-items: center;
    justify-content: center;
}
.v-scroll .thumb {
    height: 565px;
    flex: 0 1 auto;
    margin-bottom: auto;
    display: flex;
    align-items: center;
    justify-content: center;
    border: 1px solid #4e6d9f;
    border-radius: 2px;
    background: linear-gradient(90deg, #f2f5f9, #dfe5ee 45%, #b4c2d6 55%, #d7dfeb);
}
.sheet-bar {
    height: 17px;
    flex: none;
    display: flex;
    background: linear-gradient(#7f9fd0, #9fbbe2);
    border-bottom: 2px solid #5278b0;
}
.sheet-nav {
    width: 63px;
    display: flex;
    align-items: center;
    gap: 8px;
    padding-left: 5px;
    background: linear-gradient(#e2edfb, #bfd6f6);
}
.sheet-tabs {
    display: flex;
    position: relative;
    z-index: 0;
}
.sheet-tabs button {
    width: 60px;
    padding-right: 5px;
    position: relative;
    font-size: 14px;
    line-height: 14px;
}
.sheet-tabs button::before {
    content: "";
    position: absolute;
    inset: 0;
    z-index: -1;
    transform: skewX(-38deg);
    border-right: 1px solid #8397bd;
    box-shadow: inset -1px 0 0 #fff;
    background: linear-gradient(#c1d7f6, #dbe8fa);
}
.sheet-tabs .current::before {
    background: #fff;
}
.sheet-tabs button:first-child {
    width: 63px;
    background: linear-gradient(#c1d7f6, #dbe8fa) left / 20px 100% no-repeat;
}
.sheet-tabs .new-sheet {
    width: 30px;
    padding: 0;
    display: flex;
    align-items: center;
    justify-content: center;
}
.h-scroll {
    flex: 0 1 585px;
    margin-left: auto;
    display: flex;
    padding-right: 16px;
    background-color: #7b9bc9;
}
.h-scroll .grip {
    width: 7px;
    border: 1px solid #5d80b3;
    background: linear-gradient(90deg, #fff 2px, #5d80b3 2px, #5d80b3 3px, #fff 3px);
}
.h-scroll button {
    width: 18px;
    display: flex;
    align-items: center;
    justify-content: center;
}
.h-scroll .thumb {
    flex: 0 1 464px;
    display: flex;
    align-items: center;
    justify-content: center;
    border: 1px solid #4e6d9f;
    border-radius: 2px;
    background: linear-gradient(#f2f5f9, #dfe5ee 45%, #b4c2d6 55%, #d7dfeb);
}
.h-scroll .right {
    margin-left: auto;
}

/* status bar */
.status-bar {
    height: 22px;
    flex: none;
    display: flex;
    align-items: center;
    justify-content: space-between;
    background: linear-gradient(#dbe8fa, #c4d9f7 35%, #adc9f3 40%, #d6e5f9);
    border-bottom: 1px solid #34465f;
}
.ready {
    width: 40px;
    padding-left: 7px;
    border-right: 1px solid #8eafde;
}
.view-tools {
    width: 249px;
    height: 100%;
    display: flex;
    align-items: center;
    padding-left: 5px;
    border-left: 1px solid #5d80b3;
    background: linear-gradient(#a9c6ef, #8fb2e4 40%, #709ad4 45%, #86a9dc);
}
.view-buttons {
    display: flex;
    border: 1px solid #6a8fc8;
    border-radius: 2px;
    background-color: #b9d0f0;
}
.view-buttons button {
    width: 18px;
    height: 16px;
    display: flex;
    align-items: center;
    justify-content: center;
}
.view-buttons .on {
    background: linear-gradient(#fbd9a0, #fbbf4a);
}
.percent {
    width: 41px;
    font-size: 12px;
    font-family: "Open Sans", sans-serif;
    margin-right: 5px;
    margin-left: 1px;
}
.status-bar input {
    appearance: none;
    width: 102px;
    height: 16px;
    background: linear-gradient(#dfe9f7, #dfe9f7) center / 1px 8px no-repeat, linear-gradient(#dfe9f7, #dfe9f7) center / 100% 1px no-repeat;
}
.status-bar input::-webkit-slider-thumb {
    appearance: none;
    width: 9px;
    height: 13px;
    border: 1px solid #44618f;
    border-radius: 1px 1px 5px 5px;
    background-color: #e9eff8;
}

/* taskbar */
.taskbar {
    height: 39px;
    flex: none;
    display: flex;
    align-items: stretch;
    background: linear-gradient(90deg, #7f90a7, #8b9eb8 58px, #a6bfdc 116px, #a6bfdc calc(100% - 310px), #8292a8 calc(100% - 276px));
}
.start {
    width: 54px;
    padding-left: 9px;
    margin-right: 5px;
}
.task {
    width: 60px;
    margin-right: 2px;
    display: flex;
    align-items: center;
    justify-content: center;
    border: 1px solid #33445c;
    border-radius: 2px;
    box-shadow: inset 0 0 0 1px #dfe9f4;
    background: linear-gradient(135deg, #dbe5f0, #b3c7dd);
}
.stacked {
    width: 55px;
    margin-right: 7px;
    box-shadow: inset 0 0 0 1px #dfe9f4, 4px 0 0 #b3c7dd, 5px 0 0 #33445c;
}
.plain {
    border: none;
    background: none;
    box-shadow: none;
}
.front {
    background: linear-gradient(135deg, #fff, #c9d8e8);
}
.tray {
    margin-left: auto;
    display: flex;
    align-items: center;
    gap: 7px;
    color: #fff;
}
.ime {
    font-size: 17px;
    margin: -6px -1px 0 -2px;
}
.up {
    margin: 0 4px;
}
.clock {
    width: 94px;
    display: flex;
    flex-direction: column;
    justify-content: center;
    text-align: center;
    line-height: 17px;
    font-family: "Open Sans", "Noto Sans CJK KR", sans-serif;
    font-size: 12px;
    color: #fff;
}
.show-desktop {
    width: 15px;
    border: 1px solid #47566d;
    background: linear-gradient(#a7b3c3, #6f7f95);
}
```
